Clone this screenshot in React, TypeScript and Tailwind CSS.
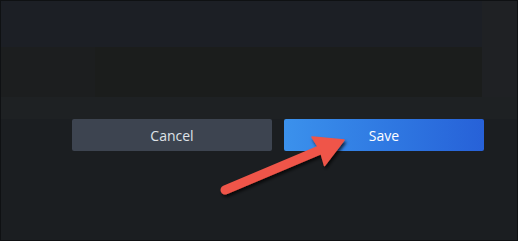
export default function App() {
  return (
    <div className="relative h-[241px] w-[518px] overflow-hidden border border-[#0f1113] bg-[#1b1e21] font-['Open_Sans',sans-serif]">
      <div className="flex h-full flex-col">
        {/* dimmed settings panel behind the dialog footer */}
        <div className="flex h-[96px]">
          <div className="flex flex-1 flex-col">
            <div className="h-[46px] bg-[#1c1f25]" />
            <div className="flex flex-1">
              <div className="w-[94px] bg-[#1c1e1f]" />
              <div className="flex-1 bg-[#1b1d1c]" />
            </div>
          </div>
          <div className="w-[35px] bg-[#1f2124]" />
        </div>
        <div className="h-[22px] bg-[#1e2123]" />

        <div className="flex gap-[12px] pl-[71px]">
          <button
            type="button"
            className="h-[32px] w-[200px] rounded-[2px] bg-[#3d4450] text-[14px] text-[#dfe3e8]"
          >
            Cancel
          </button>
          <button
            type="button"
            className="h-[32px] w-[200px] rounded-[2px] bg-gradient-to-r from-[#3b91ec] to-[#2761d8] text-[14px] text-white"
          >
            Save
          </button>
        </div>

        <div className="flex-1 bg-[#1b1e21]" />
      </div>

      <svg
        className="pointer-events-none absolute inset-0"
        width="518"
        height="241"
        viewBox="0 0 518 241"
      >
        <defs>
          <filter id="shadow" x="-20%" y="-20%" width="140%" height="140%">
            <feDropShadow dx="1.5" dy="2.5" stdDeviation="1.5" floodColor="#000" floodOpacity="0.7" />
          </filter>
        </defs>
        <g filter="url(#shadow)" fill="#ef5548" stroke="#ef5548">
          <line x1="224" y1="189" x2="320" y2="148.5" strokeWidth="9" strokeLinecap="round" />
          <path d="M343 139 L311 136 L319 148.5 L323.5 164.5 Z" strokeWidth="1.5" strokeLinejoin="round" />
        </g>
      </svg>
    </div>
  );
}
